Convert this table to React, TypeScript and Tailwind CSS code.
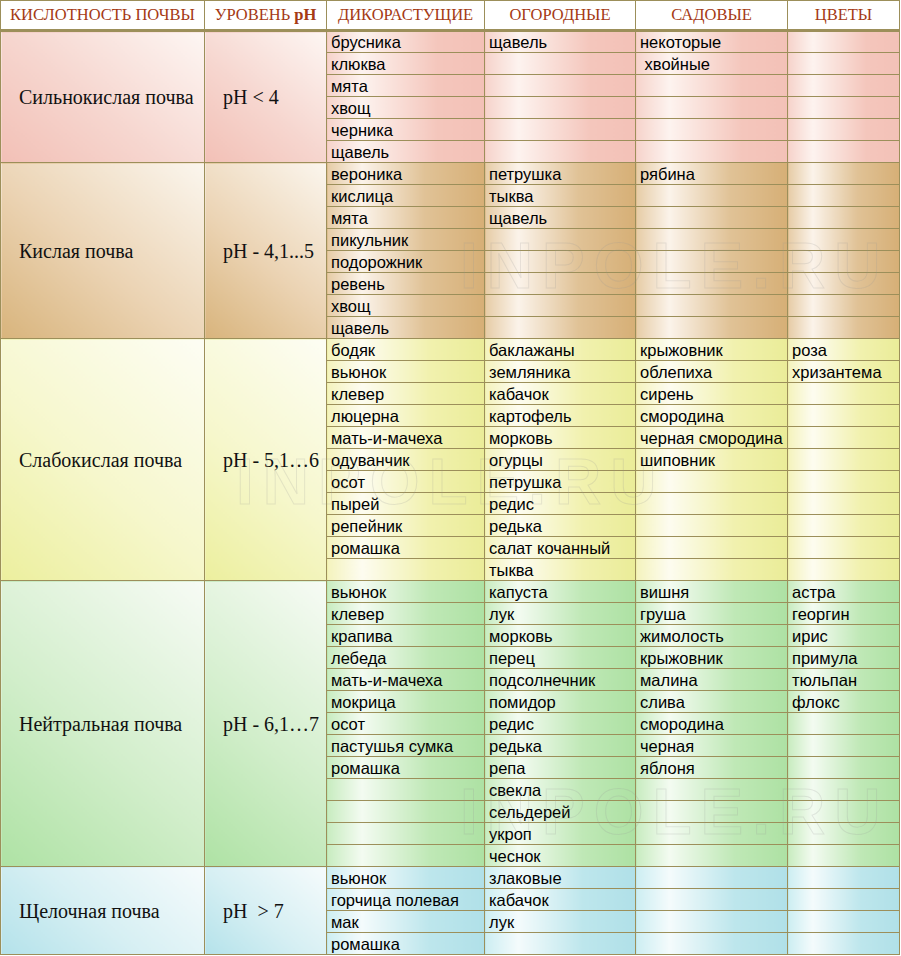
import React from 'react';

type Section = {
  name: string;
  ph: string;
  rows: number;
  wild: string[];
  garden: string[];
  orchard: string[];
  flowers: string[];
  side: string;
  cell: string;
};

const sections: Section[] = [
  {
    name: 'Сильнокислая почва',
    ph: 'pH < 4',
    rows: 6,
    wild: ['брусника', 'клюква', 'мята', 'хвощ', 'черника', 'щавель'],
    garden: ['щавель'],
    orchard: ['некоторые', '\u00a0хвойные'],
    flowers: [],
    side: 'bg-[linear-gradient(40deg,#f2c0b6_0%,#f6d6cf_45%,#fdf6f3_100%)]',
    cell: 'bg-[linear-gradient(90deg,#f6d3cb_0%,#fdf3ef_22%,#f4c6bc_70%,#f3c1b7_100%)]',
  },
  {
    name: 'Кислая почва',
    ph: 'pH - 4,1...5',
    rows: 8,
    wild: ['вероника', 'кислица', 'мята', 'пикульник', 'подорожник', 'ревень', 'хвощ', 'щавель'],
    garden: ['петрушка', 'тыква', 'щавель'],
    orchard: ['рябина'],
    flowers: [],
    side: 'bg-[linear-gradient(40deg,#d8b47c_0%,#ebd3b3_45%,#fbf6ee_100%)]',
    cell: 'bg-[linear-gradient(90deg,#e6cca6_0%,#fbf3ea_22%,#e0c296_62%,#d6af76_100%)]',
  },
  {
    name: 'Слабокислая почва',
    ph: 'pH - 5,1…6',
    rows: 11,
    wild: ['бодяк', 'вьюнок', 'клевер', 'люцерна', 'мать-и-мачеха', 'одуванчик', 'осот', 'пырей', 'репейник', 'ромашка'],
    garden: ['баклажаны', 'земляника', 'кабачок', 'картофель', 'морковь', 'огурцы', 'петрушка', 'редис', 'редька', 'салат кочанный', 'тыква'],
    orchard: ['крыжовник', 'облепиха', 'сирень', 'смородина', 'черная смородина', 'шиповник'],
    flowers: ['роза', 'хризантема'],
    side: 'bg-[linear-gradient(40deg,#ecef9e_0%,#f6f7cc_45%,#fdfdf4_100%)]',
    cell: 'bg-[linear-gradient(90deg,#f4f3bd_0%,#fdfcf0_22%,#f1f1ae_65%,#eaec98_100%)]',
  },
  {
    name: 'Нейтральная почва',
    ph: 'pH - 6,1…7',
    rows: 13,
    wild: ['вьюнок', 'клевер', 'крапива', 'лебеда', 'мать-и-мачеха', 'мокрица', 'осот', 'пастушья сумка', 'ромашка'],
    garden: ['капуста', 'лук', 'морковь', 'перец', 'подсолнечник', 'помидор', 'редис', 'редька', 'репа', 'свекла', 'сельдерей', 'укроп', 'чеснок'],
    orchard: ['вишня', 'груша', 'жимолость', 'крыжовник', 'малина', 'слива', 'смородина', 'черная', 'яблоня'],
    flowers: ['астра', 'георгин', 'ирис', 'примула', 'тюльпан', 'флокс'],
    side: 'bg-[linear-gradient(40deg,#aee2a4_0%,#d2eecb_45%,#f7fbf5_100%)]',
    cell: 'bg-[linear-gradient(90deg,#c8ecc0_0%,#f3fbf1_22%,#bfe8b6_65%,#ade1a3_100%)]',
  },
  {
    name: 'Щелочная почва',
    ph: 'pH\u00a0 > 7',
    rows: 4,
    wild: ['вьюнок', 'горчица полевая', 'мак', 'ромашка'],
    garden: ['злаковые', 'кабачок', 'лук'],
    orchard: [],
    flowers: [],
    side: 'bg-[linear-gradient(40deg,#b4e2ea_0%,#d6eff3_45%,#f6fbfc_100%)]',
    cell: 'bg-[linear-gradient(90deg,#cdeef2_0%,#f4fbfc_22%,#bde6ec_65%,#b0e0e8_100%)]',
  },
];

const headers = ['КИСЛОТНОСТЬ ПОЧВЫ', 'УРОВЕНЬ', 'ДИКОРАСТУЩИЕ', 'ОГОРОДНЫЕ', 'САДОВЫЕ', 'ЦВЕТЫ'];

const serif = "font-['Liberation_Serif','Times_New_Roman',serif]";

function Watermark({ className }: { className: string }) {
  return (
    <div
      className={`absolute pointer-events-none select-none font-['Liberation_Sans',Arial,sans-serif] font-bold text-[64px] leading-none tracking-[9px] text-transparent [-webkit-text-stroke:1px_rgba(150,150,150,0.2)] ${className}`}
    >
      INPOLE.RU
    </div>
  );
}

export default function App() {
  return (
    <div className="bg-white w-[901px] h-[956px] relative">
      <table className="w-[900px] table-fixed border-collapse border border-[#9c8f5a] font-['Liberation_Sans',Arial,sans-serif] text-[16.5px] text-black">
        <colgroup>
          <col className="w-[204px]" />
          <col className="w-[122px]" />
          <col className="w-[158px]" />
          <col className="w-[151px]" />
          <col className="w-[152px]" />
          <col />
        </colgroup>
        <thead>
          <tr className="h-[30px]">
            {headers.map((h, i) => (
              <th
                key={h}
                className={`${serif} bg-white font-normal text-[16.5px] text-[#a53a14] text-center border border-[#9c8f5a] border-b-[3px] border-b-double p-0`}
              >
                {h}
                {i === 1 && <b className="font-bold"> pH</b>}
              </th>
            ))}
          </tr>
        </thead>
        <tbody>
          {sections.map((s) =>
            Array.from({ length: s.rows }).map((_, r) => (
              <tr key={s.name + r} className="h-[22px]">
                {r === 0 && (
                  <>
                    <td
                      rowSpan={s.rows}
                      className={`${serif} ${s.side} text-[20px] text-[#111] pl-[18px] border border-[#9c8f5a] align-middle`}
                    >
                      {s.name}
                    </td>
                    <td
                      rowSpan={s.rows}
                      className={`${serif} ${s.side} text-[20px] text-[#111] pl-[18px] whitespace-pre border border-[#9c8f5a] align-middle`}
                    >
                      {s.ph}
                    </td>
                  </>
                )}
                {[s.wild, s.garden, s.orchard, s.flowers].map((list, c) => (
                  <td
                    key={c}
                    className={`${s.cell} h-[22px] p-0 pl-[4px] leading-[20px] whitespace-nowrap overflow-hidden border border-[#9c8f5a]`}
                  >
                    {list[r] ?? ''}
                  </td>
                ))}
              </tr>
            ))
          )}
        </tbody>
      </table>
      <Watermark className="left-[460px] top-[234px]" />
      <Watermark className="left-[236px] top-[450px]" />
      <Watermark className="left-[460px] top-[780px]" />
    </div>
  );
}
